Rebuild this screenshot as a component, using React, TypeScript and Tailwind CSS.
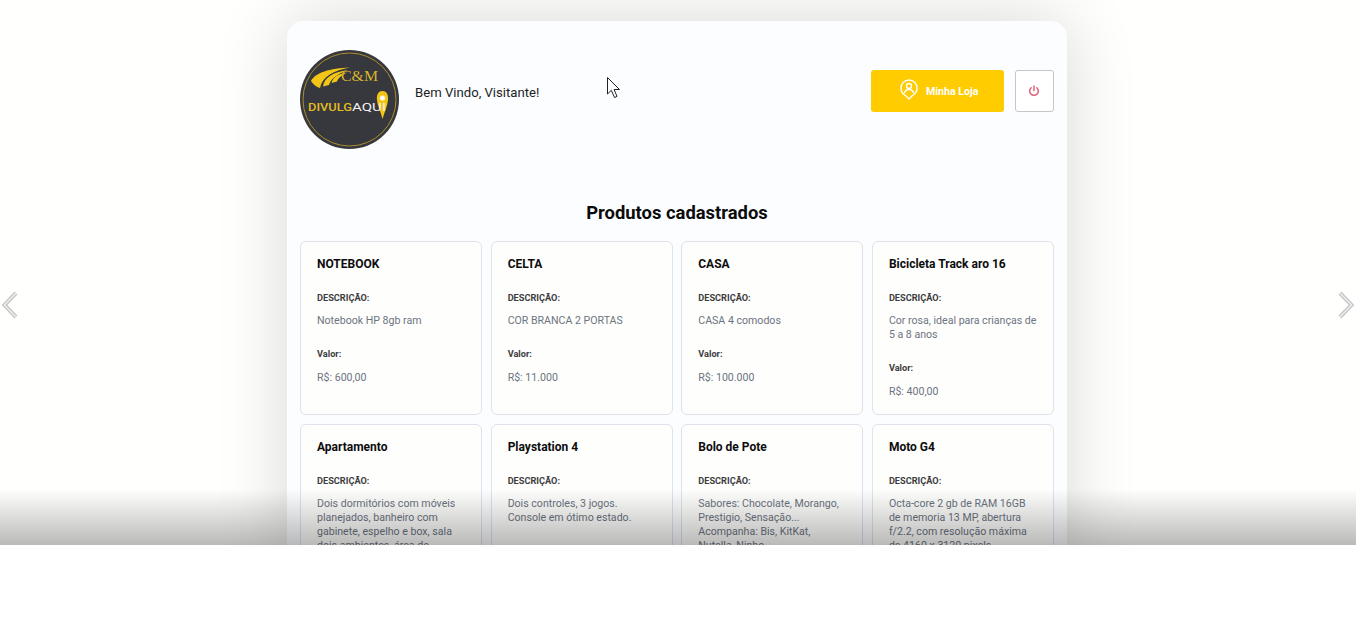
type Product = { name: string; desc: string[]; price?: string };

const products: Product[] = [
  { name: "NOTEBOOK", desc: ["Notebook HP 8gb ram"], price: "R$: 600,00" },
  { name: "CELTA", desc: ["COR BRANCA 2 PORTAS"], price: "R$: 11.000" },
  { name: "CASA", desc: ["CASA 4 comodos"], price: "R$: 100.000" },
  { name: "Bicicleta Track aro 16", desc: ["Cor rosa, ideal para crianças de", "5 a 8 anos"], price: "R$: 400,00" },
  { name: "Apartamento", desc: ["Dois dormitórios com móveis", "planejados, banheiro com", "gabinete, espelho e box, sala", "dois ambientes, área de"] },
  { name: "Playstation 4", desc: ["Dois controles, 3 jogos.", "Console em ótimo estado."] },
  { name: "Bolo de Pote", desc: ["Sabores: Chocolate, Morango,", "Prestigio, Sensação...", "Acompanha: Bis, KitKat,", "Nutella, Ninho"] },
  { name: "Moto G4", desc: ["Octa-core 2 gb de RAM 16GB", "de memoria 13 MP, abertura", "f/2.2, com resolução máxima", "de 4160 x 3120 pixels"] },
];

function Logo() {
  return (
    <svg width="99" height="99" viewBox="0 0 99 99" className="shrink-0">
      <circle cx="49.5" cy="49.5" r="49.5" fill="#36383d" />
      <circle cx="49.5" cy="49.5" r="46.5" fill="none" stroke="#a98d2c" strokeWidth="1" />
      <path d="M11 31 C15 23 30 18 50 17.500 C34 20 22 27 20 38 C16 37 13 34 11 31Z" fill="#f2c517" />
      <path d="M23 36.500 C24 28 33 22 48 20 C38 24 31 28 29 35 Z" fill="#f2c517" />
      <path d="M31.500 33 C33 27 38 24 47 22.500 C42 25 38 28 37 31.500 Z" fill="#f2c517" />
      <text x="41" y="31" textLength="37" lengthAdjust="spacingAndGlyphs" fontFamily="'Liberation Serif', serif" fontSize="14" fill="#d9b42a">C&amp;M</text>
      <path d="M82.500 41 C77.500 41 76.500 46 77 50 C77.500 56 81 62 82.500 69 C84.500 62 87.500 56 88 50 C88.500 45 87 41 82.500 41Z" fill="#f2c517" />
      <circle cx="82.500" cy="48" r="2.500" fill="#fff" />
      <text x="8" y="61" textLength="44" lengthAdjust="spacingAndGlyphs" fontFamily="Roboto, sans-serif" fontWeight="500" fontSize="11.5" fill="#e3bc22">DIVULG</text>
      <text x="52" y="61" textLength="34" lengthAdjust="spacingAndGlyphs" fontFamily="Roboto, sans-serif" fontSize="11.5" fill="#f2f2f2">AQUI</text>
    </svg>
  );
}

function Card({ name, desc, price }: Product) {
  return (
    <div className="rounded-md border border-[#dfe2ea] bg-[#fefefd] px-4 pt-[14px] pb-[15px]">
      <h3 className="text-[12px] leading-4 font-bold text-[#0d0d0d]">{name}</h3>
      <p className="mt-[19px] text-[9.2px] leading-[14px] font-bold text-[#3d3d40]">DESCRIÇÃO:</p>
      <p className="mt-[9px] text-[10.6px] leading-[14px] text-[#6c7480]">
        {desc.map((line) => (
          <span key={line} className="block whitespace-nowrap">{line}</span>
        ))}
      </p>
      {price && (
        <>
          <p className="mt-[19px] text-[9.2px] leading-[14px] font-bold text-[#3d3d40]">Valor:</p>
          <p className="mt-[10px] text-[10.6px] leading-[14px] text-[#6c7480]">{price}</p>
        </>
      )}
    </div>
  );
}

export default function App() {
  return (
    <div className="min-h-[637px] bg-white font-['Roboto',sans-serif]">
      <div className="relative flex h-[545px] justify-center overflow-hidden bg-[#fffffd] pt-[21px] pr-[2px]">
        <svg width="18" height="30" viewBox="0 0 18 30" fill="none" className="absolute top-[290px] left-px">
          <path d="M15 3 L3.500 15 L15 27" stroke="#c6c6c6" strokeWidth="4" />
          <path d="M15 3 L3.500 15 L15 27" stroke="#ececec" strokeWidth="1.500" />
        </svg>
        <svg width="18" height="30" viewBox="0 0 18 30" fill="none" className="absolute top-[290px] right-px">
          <path d="M3 3 L14.500 15 L3 27" stroke="#c6c6c6" strokeWidth="4" />
          <path d="M3 3 L14.500 15 L3 27" stroke="#ececec" strokeWidth="1.500" />
        </svg>

        <main className="w-[780px] shrink-0 self-start rounded-t-2xl bg-[#fcfdff] px-[13px] pt-[29px] shadow-[0_0_70px_rgba(0,0,0,0.16)]">
          <header className="flex items-start">
            <Logo />
            <p className="mt-[33px] ml-4 text-[13.15px] leading-5 text-[#1c1f24]">Bem Vindo, Visitante!</p>
            <div className="mt-5 ml-auto flex gap-[11px]">
              <button className="flex h-[42px] w-[133px] items-center rounded-[3px] bg-[#ffcc00] pl-[29px] text-[10.6px] font-bold text-white">
                <svg width="18" height="21" viewBox="0 0 18 21" fill="none" stroke="#fff" strokeWidth="1.400" className="-mt-1 mr-[8px]">
                  <path d="M5.500 16.500 C2.800 15 1 12.300 1 9 C1 4.600 4.600 1 9 1 C13.400 1 17 4.600 17 9 C17 12.300 15.200 15 12.500 16.500 L9 20 Z" strokeLinejoin="round" />
                  <circle cx="9" cy="7" r="2.500" />
                  <path d="M4.500 14 C5 11.500 7 10.500 9 10.500 C11 10.500 13 11.500 13.500 14" />
                </svg>
                <span className="mt-[2px]">Minha Loja</span>
              </button>
              <button className="flex h-[42px] w-[39px] items-center justify-center rounded-[3px] border-[1.5px] border-[#c6c6ca] bg-white pr-[2px]">
                <svg width="12" height="12" viewBox="0 0 12 12" fill="none" stroke="#e0607a" strokeWidth="1.500" strokeLinecap="round">
                  <path d="M6 1 V5.500" />
                  <path d="M3.200 2.800 A4.300 4.300 0 1 0 8.800 2.800" />
                </svg>
              </button>
            </div>
          </header>

          <h2 className="mt-[52px] text-center text-[18.4px] leading-6 font-bold text-[#0b0b0b]">Produtos cadastrados</h2>

          <div className="mt-4 grid grid-cols-4 gap-x-[8.500px] gap-y-[9px]">
            {products.map((p) => (
              <Card key={p.name} {...p} />
            ))}
          </div>
        </main>

        {/* fade at the bottom of the frame */}
        <div className="absolute inset-x-0 bottom-0 h-[56px] bg-gradient-to-b from-transparent to-[rgba(0,0,0,0.27)]" />

        <svg width="15" height="23" viewBox="0 0 15 23" className="absolute top-[76px] left-[606px]">
          <path d="M1.500 1.500 V18 L5.300 14.300 L8.500 21.500 L11 20.400 L8.100 13.500 L13.500 13.500 Z" fill="#fff" stroke="#222" strokeWidth="1" strokeLinejoin="round" />
        </svg>
      </div>
    </div>
  );
}
